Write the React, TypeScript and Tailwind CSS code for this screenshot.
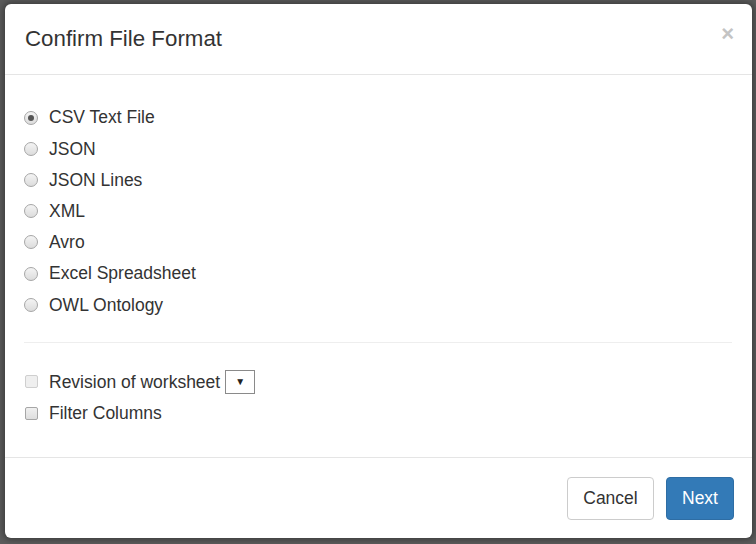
const formats = [
  "CSV Text File",
  "JSON",
  "JSON Lines",
  "XML",
  "Avro",
  "Excel Spreadsheet",
  "OWL Ontology",
];

function Radio({ checked }: { checked?: boolean }) {
  return (
    <span className="flex h-[14px] w-[14px] items-center justify-center rounded-full border border-[#a6a6a6] bg-gradient-to-b from-[#f4f4f4] to-[#dcdcdc]">
      {checked && <span className="h-[6px] w-[6px] rounded-full bg-[#555]" />}
    </span>
  );
}

function Checkbox({ disabled }: { disabled?: boolean }) {
  return (
    <span
      className={
        disabled
          ? "block h-[13px] w-[13px] rounded-[2px] border border-[#cfcfcf] bg-[#efefef]"
          : "block h-[13px] w-[13px] rounded-[2px] border border-[#a6a6a6] bg-gradient-to-b from-[#f0f0f0] to-[#dedede]"
      }
    />
  );
}

export default function App() {
  return (
    <div className="h-[544px] w-[756px] bg-[#5c5c5c] pl-[5px] pt-[4px] font-['Liberation_Sans',Arial,sans-serif] text-[#333]">
      <div className="flex h-[534px] w-[747px] flex-col rounded-[6px] bg-white shadow-[0_0_6px_2px_rgba(0,0,0,0.35)]">
        {/* Header */}
        <div className="flex h-[71px] items-center justify-between border-b border-[#e5e5e5] pl-[20px] pr-[18px]">
          <h4 className="text-[22.3px] leading-none">Confirm File Format</h4>
          <span className="-mt-[10px] text-[22px] font-bold leading-none text-[#c4c4c4]">×</span>
        </div>

        {/* Body */}
        <div className="flex-1 px-[19px] pt-[27px]">
          <div className="flex flex-col">
            {formats.map((f, i) => (
              <label key={f} className="flex h-[31.2px] items-center text-[17.5px]">
                <span className="mr-[11px] flex w-[14px] justify-center">
                  <Radio checked={i === 0} />
                </span>
                {f}
              </label>
            ))}
          </div>
          <div className="mt-[22px] mr-[1px] border-t border-[#eeeeee]" />
          <div className="mt-[23px] flex flex-col">
            <label className="flex h-[31.2px] items-center text-[17.5px]">
              <span className="ml-[1px] mr-[11px]">
                <Checkbox disabled />
              </span>
              Revision of worksheet
              <span className="ml-[5px] flex h-[24px] w-[30px] items-center justify-center border border-[#8a8a8a] bg-white text-[10px] text-[#222]">
                ▼
              </span>
            </label>
            <label className="flex h-[31.2px] items-center text-[17.5px]">
              <span className="ml-[1px] mr-[11px]">
                <Checkbox />
              </span>
              Filter Columns
            </label>
          </div>
        </div>

        {/* Footer */}
        <div className="flex h-[81px] items-center justify-end gap-[12px] border-t border-[#e5e5e5] pr-[18px]">
          <button className="h-[43px] w-[87px] rounded-[4px] border border-[#cccccc] bg-white text-[17.5px] text-[#333]">
            Cancel
          </button>
          <button className="h-[43px] w-[68px] rounded-[4px] border border-[#2e6da4] bg-[#337ab7] text-[17.5px] text-white">
            Next
          </button>
        </div>
      </div>
    </div>
  );
}
